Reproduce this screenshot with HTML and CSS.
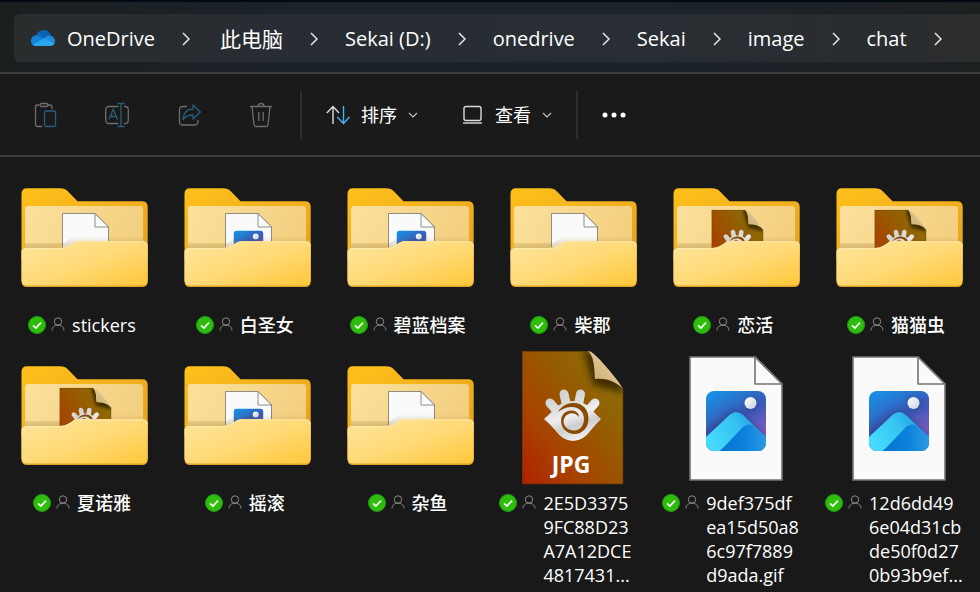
FILE: index.html
```html
<!DOCTYPE html>
<html lang="zh-CN">
<head>
<meta charset="utf-8">
<title>chat</title>
<link rel="stylesheet" href="styles.css">
</head>
<body>
<svg class="defs" aria-hidden="true">
  <defs>
    <linearGradient id="g-back" x1="0" y1="0" x2="1" y2="1"><stop offset="0" stop-color="#ffc01a"/><stop offset=".6" stop-color="#f0ae1e"/><stop offset="1" stop-color="#e3a01c"/></linearGradient>
    <linearGradient id="g-inner" x1="0" y1="0" x2="1" y2=".3"><stop offset="0" stop-color="#fbe19d"/><stop offset="1" stop-color="#f3cf80"/></linearGradient>
    <linearGradient id="g-front" x1="0" y1="0" x2="1" y2="1"><stop offset="0" stop-color="#ffe59c"/><stop offset=".5" stop-color="#ffda78"/><stop offset="1" stop-color="#ffc83a"/></linearGradient>
    <linearGradient id="g-shade" x1="0" y1="0" x2="0" y2="1"><stop offset="0" stop-color="#8a6414" stop-opacity="0"/><stop offset="1" stop-color="#8a6414" stop-opacity=".3"/></linearGradient>
    <linearGradient id="g-sky" x1="0" y1="0" x2=".55" y2="1"><stop offset="0" stop-color="#1298ea"/><stop offset=".55" stop-color="#3b5ab8"/><stop offset="1" stop-color="#8a5cc4"/></linearGradient>
    <linearGradient id="g-ridge" x1="0" y1=".6" x2="1" y2=".2"><stop offset="0" stop-color="#46dcff"/><stop offset=".5" stop-color="#36c4f2"/><stop offset="1" stop-color="#1b8ee0"/></linearGradient>
    <linearGradient id="g-hill" x1="0" y1="0" x2="1" y2="0"><stop offset="0" stop-color="#0672cf"/><stop offset=".5" stop-color="#0a80dc"/><stop offset="1" stop-color="#2f9de6"/></linearGradient>
    <linearGradient id="g-moon" x1="0" y1="0" x2="1" y2="1"><stop offset="0" stop-color="#fff"/><stop offset="1" stop-color="#c9d2e0"/></linearGradient>
    <linearGradient id="g-jpg" x1="0" y1="1" x2="1" y2="0"><stop offset="0" stop-color="#b02000"/><stop offset=".3" stop-color="#a74300"/><stop offset=".6" stop-color="#965b00"/><stop offset="1" stop-color="#85780d"/></linearGradient>
    <linearGradient id="g-curl" x1="0" y1="1" x2="1" y2="0"><stop offset="0" stop-color="#c9a568"/><stop offset=".45" stop-color="#d9bc88"/><stop offset="1" stop-color="#f6e6b4"/></linearGradient>
    <linearGradient id="g-metal" gradientUnits="userSpaceOnUse" x1="55" y1="46" x2="72" y2="96"><stop offset="0" stop-color="#d0d0d0"/><stop offset=".3" stop-color="#dedede"/><stop offset=".5" stop-color="#efefef"/><stop offset=".7" stop-color="#cecece"/><stop offset="1" stop-color="#f2f2f2"/></linearGradient>
    <filter id="f-soft" x="-30%" y="-30%" width="160%" height="160%"><feGaussianBlur stdDeviation="3"/></filter>
    <clipPath id="c-photo"><rect x="42" y="44" width="60" height="60" rx="8"/></clipPath>
    <clipPath id="c-jpg"><path d="M21 4H87C94 12 92 24 94 32 104 31 115 34 122 42V137H21Z"/></clipPath>
    <clipPath id="c-pocket"><path d="M0 0H144V76H62L54 80H0Z"/></clipPath>
  </defs>

  <symbol id="page" viewBox="0 0 144 144">
    <path d="M26 10H91L118 37V133H26Z" fill="#fafafa" stroke="#74756f" stroke-width="1.6"/>
    <path d="M91 10V37H118Z" fill="#fafafa" stroke="#74756f" stroke-width="1.6" stroke-linejoin="round"/>
  </symbol>
  <symbol id="photo" viewBox="0 0 144 144">
    <use href="#page"/>
    <g clip-path="url(#c-photo)">
      <rect x="42" y="44" width="60" height="60" fill="url(#g-sky)"/>
      <circle cx="87" cy="57" r="7" fill="#283a7c" opacity=".45" filter="url(#f-soft)"/>
      <circle cx="86.500" cy="56" r="6" fill="url(#g-moon)"/>
      <path d="M42 84 66 64Q72 60 78 65L102 88V106H42Z" fill="#2a3578" opacity=".5" filter="url(#f-soft)"/>
      <path d="M40 92 66 67.500Q72 62.500 78.500 67.500L104 92V106H40Z" fill="url(#g-ridge)"/>
      <path d="M54 105Q57 103 60 100L77 82Q82 76 89 78L104 92V106Z" fill="url(#g-hill)"/>
    </g>
  </symbol>
  <symbol id="jpg" viewBox="0 0 144 144">
    <g clip-path="url(#c-jpg)">
      <rect x="21" y="4" width="101" height="134" fill="url(#g-jpg)"/>
      <path d="M82 3 92 38 122 46V36L90 4Z" fill="#3a2c00" opacity=".9" filter="url(#f-soft)"/>
    </g>
    <path d="M21.500 4.500H87M122 42V137H21.500V4.500" fill="none" stroke="#5d3208" stroke-opacity=".7"/>
    <path d="M87 4C94 11 93 23 94 32 104 31 115 34 122 42 119 35 99 12 93 7Q90 4 87 4Z" fill="url(#g-curl)"/>
    <path d="M49 56 56 64M63 47 66 60M79.500 47 77 60M94 56 87 64" stroke="url(#g-metal)" stroke-width="9" stroke-linecap="round" fill="none"/>
    <path d="M43 72Q50 66 55 60 63 54 72 54T89 60Q93 66 100 72 95 77 90 83 82 94 72 94T54 83Q49 77 43 72Z" fill="url(#g-metal)"/>
    <path d="M57 65C61 58 67 56 73 56 82 56 87.500 63 87.500 71.500 87.500 81 81 87 73.500 87 66 87 60 81 60 74 60 67 66 63 71 63.500 76 64 78 67 78 70 75 66.500 72 66 69 66.500 65 67.500 62.500 71 62.500 75 63 80 68 83.500 73 83.500 79.500 83.500 83 78 83 72 83 65 78 60 71 60 65 60 61 62 57 65Z" fill="#8a4a04"/>
  </symbol>
  <symbol id="folder-back" viewBox="0 0 144 144">
    <path d="M9.500 25Q9.500 19.300 15 19.300H48Q53 19.300 56 22.500L65.500 32.300H130Q135.700 32.300 135.700 38V90H9.500Z" fill="url(#g-back)"/>
    <rect x="13" y="37" width="118" height="60" rx="3" fill="url(#g-inner)"/>
  </symbol>
  <symbol id="folder-front" viewBox="0 0 144 144">
    <path d="M13 74H52L62 67H131V80H13Z" fill="url(#g-shade)"/>
    <path d="M9.500 84Q9.500 79 15 79H48Q53 79 56 77L62 73.500Q64 72.300 67 72.300H131Q135.700 72.300 135.700 77V112Q135.700 118 130 118H15Q9.500 118 9.500 112Z" fill="#dfa32a"/>
    <path d="M9.500 84Q9.500 79 15 79H48Q53 79 56 77L62 73.500Q64 72.300 67 72.300H131Q135.700 72.300 135.700 77V111Q135.700 116.500 130 116.500H15Q9.500 116.500 9.500 111Z" fill="url(#g-front)"/>
    <path d="M10 83Q10 79.500 15 79.500H48Q53 79.500 56 77.500L62 74Q64 72.800 67 72.800H131Q135 72.800 135 77" fill="none" stroke="#ffedb8" stroke-opacity=".8"/>
  </symbol>
  <symbol id="folder-page" viewBox="0 0 144 144">
    <use href="#folder-back"/>
    <g transform="translate(37.500 39.500) scale(.5)"><use href="#page" width="144" height="144"/></g>
    <use href="#folder-front"/>
  </symbol>
  <symbol id="folder-photo" viewBox="0 0 144 144">
    <use href="#folder-back"/>
    <g transform="translate(37.500 39.500) scale(.5)"><use href="#photo" width="144" height="144"/></g>
    <use href="#folder-front"/>
  </symbol>
  <symbol id="folder-jpg" viewBox="0 0 144 144">
    <use href="#folder-back"/>
    <g clip-path="url(#c-pocket)"><g transform="translate(36.800 39) scale(.51)"><use href="#jpg" width="144" height="144"/></g></g>
    <use href="#folder-front"/>
  </symbol>

  <symbol id="synced" viewBox="0 0 18 18">
    <circle cx="9" cy="9" r="8.500" fill="#2dbd0a" stroke="#1f9c1c"/>
    <path d="M5 9.300 7.900 12 13 6.600" fill="none" stroke="#fff" stroke-width="1.600"/>
  </symbol>
  <symbol id="person" viewBox="0 0 14 14">
    <circle cx="7" cy="4.500" r="3.700" fill="none" stroke="#8b8b8b"/>
    <path d="M1 13.500C1 10 3.500 8.200 7 8.200S13 10 13 13.500" fill="none" stroke="#8b8b8b"/>
  </symbol>
  <symbol id="next" viewBox="0 0 8 14"><path d="M1 1 7 7 1 13" fill="none" stroke="#e6e6e6" stroke-width="1.500"/></symbol>
  <symbol id="down" viewBox="0 0 10 6"><path d="M1 1 5 5 9 1" fill="none" stroke="#c4c4c4" stroke-width="1.200"/></symbol>
</svg>

<header class="top">
  <nav class="address" aria-label="路径">
    <svg class="cloud" viewBox="0 0 26 18" aria-hidden="true">
      <path d="M6 8C7 3 10 1 13.500 1 17 1 20 3 21 7L15 12 5 10Z" fill="#0a63b8"/>
      <path d="M1 12C1 8 4 6 7 6.200 9 6.400 10 7 12 8.500L16 11 6 17C3 17 1 15 1 12Z" fill="#1480d8"/>
      <path d="M14 9.500C16 7 19 6 21 7 24 7.500 25 10 25 12L24 15 12 12Z" fill="#1b8ee0"/>
      <path d="M2.500 15.500 14 9.600 24.500 14C24 16 22.500 17 20.500 17H6.500C5 17 3.500 16.500 2.500 15.500Z" fill="#2aa6ec"/>
    </svg>
    <ol class="crumbs">
      <li><a href="#">OneDrive</a><svg class="next"><use href="#next"/></svg></li>
      <li><a href="#" class="han">此电脑</a><svg class="next"><use href="#next"/></svg></li>
      <li><a href="#">Sekai (D:)</a><svg class="next"><use href="#next"/></svg></li>
      <li><a href="#">onedrive</a><svg class="next"><use href="#next"/></svg></li>
      <li><a href="#">Sekai</a><svg class="next"><use href="#next"/></svg></li>
      <li><a href="#">image</a><svg class="next"><use href="#next"/></svg></li>
      <li><a href="#">chat</a><svg class="next"><use href="#next"/></svg></li>
    </ol>
  </nav>
</header>

<div class="toolbar" role="toolbar">
  <div class="edit">
    <button class="tool" disabled aria-label="粘贴"><svg viewBox="0 0 24 26"><g fill="none" stroke-width="1.300"><path d="M6 3H4.500Q2.500 3 2.500 5V22.500Q2.500 24.500 4.500 24.500H9M14 3H17Q19 3 19 5V7" stroke="#6d6d6d"/><rect x="7" y="1.500" width="8" height="3" rx="1.500" stroke="#6d6d6d"/><rect x="11.500" y="9" width="11" height="15.500" rx="1.500" stroke="#2a5e7c"/></g></svg></button>
    <button class="tool" disabled aria-label="重命名"><svg viewBox="0 0 24 26"><g fill="none" stroke-width="1.300"><path d="M13.500 4.500H4Q.7 4.500.7 8V18Q.7 21.500 4 21.500H13.500M19 4.500H20Q23.300 4.500 23.300 8V18Q23.300 21.500 20 21.500H19" stroke="#6d6d6d"/><path d="M12.500 1.500H19.500M12.500 24.500H19.500M16 1.500V24.500M4 17.500 8.300 7.500 12.500 17.500M5.300 14.500H11.200" stroke="#2a5e7c"/></g></svg></button>
    <button class="tool" disabled aria-label="共享"><svg viewBox="0 0 24 26"><g fill="none" stroke-width="1.300" stroke-linejoin="round"><path d="M10 4.500H6Q2.500 4.500 2.500 8V19.500Q2.500 23 6 23H17.500Q21 23 21 19.500V18" stroke="#6d6d6d"/><path d="M16 3 23.300 10 16 17V13C11 13 8.500 14 6 17.500 6.500 11 10 7 16 7Z" stroke="#2a5e7c"/></g></svg></button>
    <button class="tool" disabled aria-label="删除"><svg viewBox="0 0 24 26"><g fill="none" stroke="#6d6d6d" stroke-width="1.300"><path d="M1 4.500H23M9 4.500Q9 1.500 12 1.500T15 4.500M3 4.500 5 22.500Q5.300 24.500 7 24.500H17Q18.700 24.500 19 22.500L21 4.500M9.800 10V19M14.200 10V19"/></g></svg></button>
  </div>
  <div class="arrange">
    <button class="menu"><svg class="glyph" viewBox="0 0 24 20"><g fill="none" stroke-width="1.400"><path d="M7 19V1.500M.8 8 7 1.500 13 8" stroke="#dcdcdc"/><path d="M17.500 1V18.500M11.200 12 17.500 18.500 23.500 12" stroke="#48b4ee"/></g></svg>排序<svg class="down"><use href="#down"/></svg></button>
    <button class="menu"><svg class="glyph" viewBox="0 0 24 20"><g fill="none" stroke="#dcdcdc" stroke-width="1.400"><rect x="4" y="1.500" width="17" height="14" rx="2"/><path d="M3 18H22"/></g></svg>查看<svg class="down"><use href="#down"/></svg></button>
  </div>
  <button class="more" aria-label="更多"><svg viewBox="0 0 24 6"><g fill="#fff"><circle cx="3" cy="3" r="2.500"/><circle cx="12" cy="3" r="2.500"/><circle cx="21" cy="3" r="2.500"/></g></svg></button>
</div>

<main>
  <ul class="files">
    <li><a href="#" class="file"><svg class="thumb"><use href="#folder-page"/></svg><span class="label"><svg class="synced"><use href="#synced"/></svg><svg class="person"><use href="#person"/></svg><span>stickers</span></span></a></li>
    <li><a href="#" class="file"><svg class="thumb"><use href="#folder-photo"/></svg><span class="label"><svg class="synced"><use href="#synced"/></svg><svg class="person"><use href="#person"/></svg><span>白圣女</span></span></a></li>
    <li><a href="#" class="file"><svg class="thumb"><use href="#folder-photo"/></svg><span class="label"><svg class="synced"><use href="#synced"/></svg><svg class="person"><use href="#person"/></svg><span>碧蓝档案</span></span></a></li>
    <li><a href="#" class="file"><svg class="thumb"><use href="#folder-page"/></svg><span class="label"><svg class="synced"><use href="#synced"/></svg><svg class="person"><use href="#person"/></svg><span>柴郡</span></span></a></li>
    <li><a href="#" class="file"><svg class="thumb"><use href="#folder-jpg"/></svg><span class="label"><svg class="synced"><use href="#synced"/></svg><svg class="person"><use href="#person"/></svg><span>恋活</span></span></a></li>
    <li><a href="#" class="file"><svg class="thumb"><use href="#folder-jpg"/></svg><span class="label"><svg class="synced"><use href="#synced"/></svg><svg class="person"><use href="#person"/></svg><span>猫猫虫</span></span></a></li>
    <li><a href="#" class="file"><svg class="thumb"><use href="#folder-jpg"/></svg><span class="label"><svg class="synced"><use href="#synced"/></svg><svg class="person"><use href="#person"/></svg><span>夏诺雅</span></span></a></li>
    <li><a href="#" class="file"><svg class="thumb"><use href="#folder-photo"/></svg><span class="label"><svg class="synced"><use href="#synced"/></svg><svg class="person"><use href="#person"/></svg><span>摇滚</span></span></a></li>
    <li><a href="#" class="file"><svg class="thumb"><use href="#folder-page"/></svg><span class="label"><svg class="synced"><use href="#synced"/></svg><svg class="person"><use href="#person"/></svg><span>杂鱼</span></span></a></li>
    <li><a href="#" class="file"><svg class="thumb" viewBox="0 0 144 144"><use href="#jpg"/><text x="70" y="126" text-anchor="middle" class="jpg-mark">JPG</text></svg><span class="label"><svg class="synced"><use href="#synced"/></svg><svg class="person"><use href="#person"/></svg><span class="long">2E5D3375<br>9FC88D23<br>A7A12DCE<br>4817431...</span></span></a></li>
    <li><a href="#" class="file"><svg class="thumb"><use href="#photo"/></svg><span class="label"><svg class="synced"><use href="#synced"/></svg><svg class="person"><use href="#person"/></svg><span class="long">9def375df<br>ea15d50a8<br>6c97f7889<br>d9ada.gif</span></span></a></li>
    <li><a href="#" class="file"><svg class="thumb"><use href="#photo"/></svg><span class="label"><svg class="synced"><use href="#synced"/></svg><svg class="person"><use href="#person"/></svg><span class="long">12d6dd49<br>6e04d31cb<br>de50f0d27<br>0b93b9ef...</span></span></a></li>
  </ul>
</main>
</body>
</html>
```
FILE: styles.css
```css
* { box-sizing: border-box; }

body {
  margin: 0;
  background: #191919;
  color: #fff;
  font-family: "Open Sans", "Noto Sans CJK SC", sans-serif;
  font-size: 18px;
  line-height: 24px;
}

a { color: inherit; text-decoration: none; }
svg { display: block; flex: none; }
ul, ol { margin: 0; padding: 0; list-style: none; }

button {
  border: 0;
  padding: 0;
  background: none;
  color: inherit;
  font: inherit;
}

.defs { position: absolute; width: 0; height: 0; }

.top {
  padding: 12px 0 10px 14px;
  border-top: 2px solid #020a14;
  border-bottom: 2px solid #3c3c3c;
  background: linear-gradient(90deg, #1c1f20, #1b2229 30%, #1b222a 65%, #1e2122);
}

.address {
  display: flex;
  align-items: center;
  gap: 11px;
  height: 48px;
  padding-left: 16px;
  border-radius: 6px 0 0 6px;
  background: linear-gradient(90deg, #2a2d2e, #282d34 30%, #282e34 65%, #2b2d2e);
}

.cloud { width: 26px; height: 18px; }

.crumbs {
  display: flex;
  padding-top: 2px;
  font-size: 20px;
  line-height: 28px;
  white-space: nowrap;
}

.crumbs li { display: flex; align-items: center; }
.crumbs .han { padding-left: 3px; font-size: 21px; }
.next { width: 8px; height: 14px; margin: 0 27px; }

.toolbar {
  display: flex;
  align-items: center;
  height: 83px;
  border-bottom: 2px solid #3c3c3c;
  background: #1a1a1a;
}

.edit, .arrange {
  display: flex;
  align-items: center;
  height: 48px;
  border-right: 2px solid #2e2e2e;
}

.edit { gap: 48px; padding: 0 27px 0 33px; }
.tool svg { width: 24px; height: 26px; }

.arrange { gap: 42px; padding: 0 24px; }
.menu { display: flex; align-items: center; gap: 11px; }
.glyph { width: 24px; height: 20px; }
.down { width: 10px; height: 6px; }

.more { padding: 0 24px; }
.more svg { width: 24px; height: 6px; }

.files {
  display: grid;
  grid-template-columns: repeat(6, 1fr);
  row-gap: 10px;
  padding: 12px 0 0 3px;
}

.file {
  display: flex;
  flex-direction: column;
  align-items: center;
}

.thumb { width: 144px; height: 144px; }

.label {
  display: flex;
  padding-right: 5px;
  font-weight: 500;
}

.long { width: 98px; }
.synced { width: 18px; height: 18px; margin: 3px 5px 0 0; }
.person { width: 14px; height: 14px; margin: 4px 7px 0 0; }

.jpg-mark {
  fill: #fff;
  font: bold 23px "Open Sans", sans-serif;
}
```
